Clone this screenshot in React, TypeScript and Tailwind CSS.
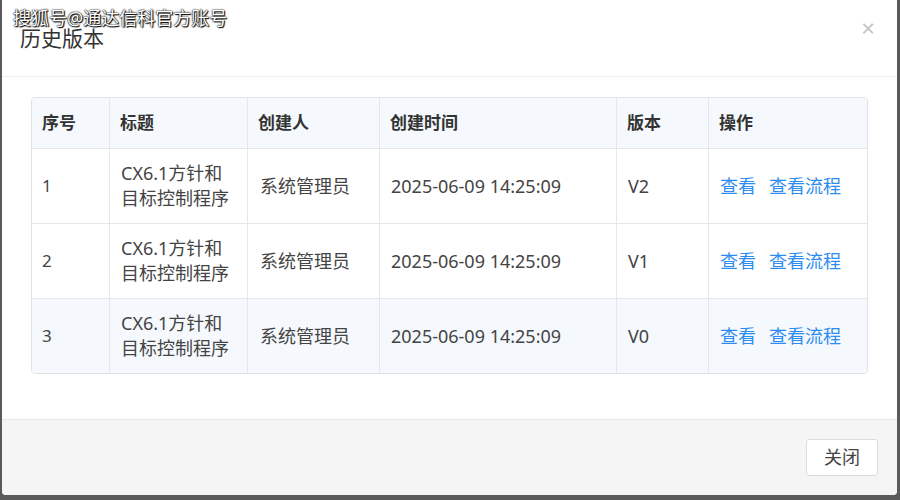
import React from 'react';

const rows = [
  { no: '1', user: '系统管理员', time: '2025-06-09 14:25:09', ver: 'V2' },
  { no: '2', user: '系统管理员', time: '2025-06-09 14:25:09', ver: 'V1' },
  { no: '3', user: '系统管理员', time: '2025-06-09 14:25:09', ver: 'V0' },
];

const cols = ['w-[78px]', 'w-[138px]', 'w-[132px]', 'w-[237px]', 'w-[92px]', 'flex-1'];

export default function App() {
  return (
    <div className="w-[900px] h-[500px] bg-[#5a5a5a] pl-[2px] pr-[3px] pb-[5px] font-['Noto_Sans','Noto_Sans_CJK_SC',sans-serif]">
      <div className="relative h-full bg-white rounded-b-[4px] flex flex-col overflow-hidden">
        <div className="absolute left-[11px] top-[6px] text-[18px] leading-[24px] text-white [text-shadow:_0_0_2px_#000,_0_0_1px_#000,_1px_1px_1px_#000]">
          搜狐号@通达信科官方账号
        </div>
        <div className="h-[77px] border-b border-[#eeeeee] flex items-start justify-between pl-[18px] pr-[22px] pt-[24px]">
          <h1 className="text-[21px] leading-[28px] text-[#333]">历史版本</h1>
          <span className="text-[24px] leading-[24px] text-[#c4c4c4] -mt-[8px]">×</span>
        </div>
        <div className="flex-1 px-[29px] pt-[20px]">
          <div className="border border-[#dfe3e8] rounded-[4px] overflow-hidden text-[17px]">
            <div className="flex h-[50px] bg-[#f5f9fd] font-bold text-[#333]">
              {['序号', '标题', '创建人', '创建时间', '版本', '操作'].map((h, i) => (
                <div key={h} className={`${cols[i]} flex items-center pl-[10px] ${i < 5 ? 'border-r border-[#e3e7ec]' : ''}`}>
                  {h}
                </div>
              ))}
            </div>
            {rows.map((r, ri) => (
              <div
                key={r.no}
                className={`flex h-[75px] border-t border-[#e3e7ec] text-[#444] ${ri === 2 ? 'bg-[#f5f9fd]' : 'bg-white'}`}
              >
                <div className={`${cols[0]} flex items-center pl-[10px] border-r border-[#e3e7ec]`}>{r.no}</div>
                <div className={`${cols[1]} flex items-center pl-[11px] pr-[4px] border-r border-[#e3e7ec] leading-[25px] text-[18px]`}>
                  <span>CX6.1方针和<br />目标控制程序</span>
                </div>
                <div className={`${cols[2]} flex items-center pl-[12px] border-r border-[#e3e7ec] text-[18px]`}>{r.user}</div>
                <div className={`${cols[3]} flex items-center pl-[11px] border-r border-[#e3e7ec] text-[18px]`}>{r.time}</div>
                <div className={`${cols[4]} flex items-center pl-[11px] border-r border-[#e3e7ec] text-[18px]`}>{r.ver}</div>
                <div className={`${cols[5]} flex items-center pl-[11px] gap-[13px] text-[#2d8cf0] text-[18px]`}>
                  <span>查看</span>
                  <span>查看流程</span>
                </div>
              </div>
            ))}
          </div>
        </div>
        <div className="h-[76px] bg-[#f5f5f5] border-t border-[#e8e8e8] flex items-center justify-end pr-[19px]">
          <button className="w-[72px] h-[37px] bg-white border border-[#dcdcdc] rounded-[3px] text-[18px] text-[#444]">
            关闭
          </button>
        </div>
      </div>
    </div>
  );
}
